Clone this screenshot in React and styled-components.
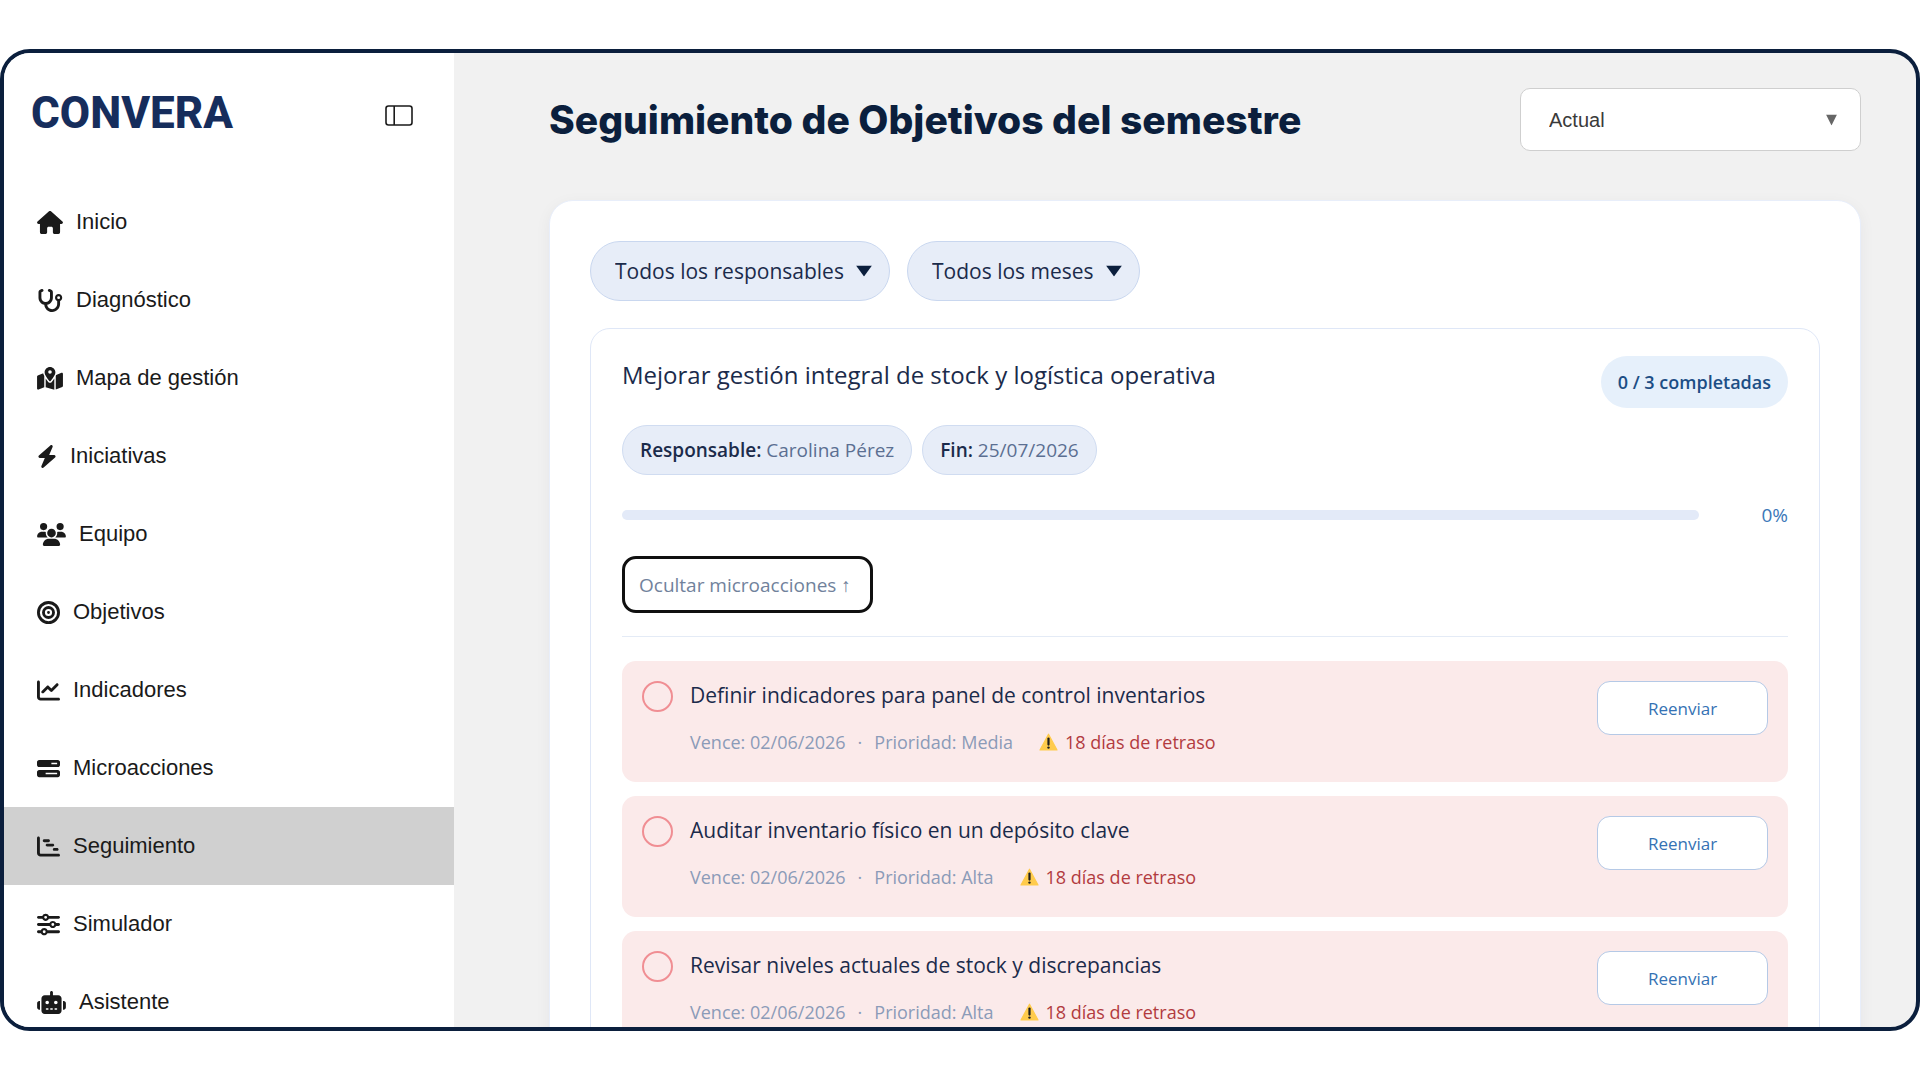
import { useState } from 'react';
import styled, { createGlobalStyle } from 'styled-components';
import {
  FaBarsProgress,
  FaBolt,
  FaBullseye,
  FaChartGantt,
  FaChartLine,
  FaHouse,
  FaMapLocationDot,
  FaRobot,
  FaSliders,
  FaStethoscope,
  FaUsers,
} from 'react-icons/fa6';

const navItems = [
  { label: 'Inicio', icon: FaHouse, width: 26 },
  { label: 'Diagnóstico', icon: FaStethoscope, width: 26 },
  { label: 'Mapa de gestión', icon: FaMapLocationDot, width: 26 },
  { label: 'Iniciativas', icon: FaBolt, width: 20 },
  { label: 'Equipo', icon: FaUsers, width: 29 },
  { label: 'Objetivos', icon: FaBullseye, width: 23 },
  { label: 'Indicadores', icon: FaChartLine, width: 23 },
  { label: 'Microacciones', icon: FaBarsProgress, width: 23 },
  { label: 'Seguimiento', icon: FaChartGantt, width: 23 },
  { label: 'Simulador', icon: FaSliders, width: 23 },
  { label: 'Asistente', icon: FaRobot, width: 29 },
];

const initialActions = [
  {
    id: 1,
    title: 'Definir indicadores para panel de control inventarios',
    due: '02/06/2026',
    priority: 'Media',
    delay: 18,
    done: false,
  },
  {
    id: 2,
    title: 'Auditar inventario físico en un depósito clave',
    due: '02/06/2026',
    priority: 'Alta',
    delay: 18,
    done: false,
  },
  {
    id: 3,
    title: 'Revisar niveles actuales de stock y discrepancias',
    due: '02/06/2026',
    priority: 'Alta',
    delay: 18,
    done: false,
  },
];

function PanelIcon() {
  return (
    <svg width='28' height='21' viewBox='0 0 28 21' fill='none' stroke='#1a1a1a'>
      <rect x='1' y='1' width='26' height='19' rx='2.5' strokeWidth='1.6' />
      <path d='M9.2 1v19' strokeWidth='1.6' />
    </svg>
  );
}

function Caret({ width }) {
  return (
    <svg width={width} height='11' viewBox={`0 0 ${width} 11`} aria-hidden='true'>
      <path d={`M0 0h${width}L${width / 2} 11z`} fill='currentColor' />
    </svg>
  );
}

function WarningIcon() {
  return (
    <svg width='19' height='18' viewBox='0 0 19 18' aria-hidden='true'>
      <path
        d='M9.5 1.2 18 17H1z'
        fill='#ffcb4c'
        stroke='#ffcb4c'
        strokeWidth='1.2'
        strokeLinejoin='round'
      />
      <path d='M9.5 5.6v6' stroke='#1f1f1f' strokeWidth='2.2' strokeLinecap='round' />
      <circle cx='9.5' cy='14.6' r='1.2' fill='#1f1f1f' />
    </svg>
  );
}

function Sidebar() {
  return (
    <SidebarWrapper>
      <Brand>
        <Logo href='#inicio'>CONVERA</Logo>
        <ToggleButton type='button' aria-label='Contraer menú'>
          <PanelIcon />
        </ToggleButton>
      </Brand>
      <nav>
        <NavList>
          {navItems.map(({ label, icon: Icon, width }) => (
            <li key={label}>
              <NavLink href='#' $active={label === 'Seguimiento'} $iconWidth={width}>
                <Icon />
                {label}
              </NavLink>
            </li>
          ))}
        </NavList>
      </nav>
    </SidebarWrapper>
  );
}

function App() {
  const [actions, setActions] = useState(initialActions);
  const [showActions, setShowActions] = useState(true);

  const completed = actions.filter((action) => action.done).length;
  const percent = Math.round((completed / actions.length) * 100);

  const handleToggleDone = (id) => {
    setActions(
      actions.map((action) =>
        action.id === id ? { ...action, done: !action.done } : action
      )
    );
  };

  return (
    <Page>
      <GlobalStyle />
      <Frame>
        <Sidebar />
        <Main>
          <Header>
            <h1>Seguimiento de Objetivos del semestre</h1>
            <PeriodField>
              <select aria-label='Semestre'>
                <option>Actual</option>
                <option>Anterior</option>
              </select>
              <Caret width={11} />
            </PeriodField>
          </Header>

          <Board>
            <Filters>
              <FilterField>
                <select aria-label='Responsables'>
                  <option>Todos los responsables</option>
                </select>
                <Caret width={16} />
              </FilterField>
              <FilterField>
                <select aria-label='Meses'>
                  <option>Todos los meses</option>
                </select>
                <Caret width={16} />
              </FilterField>
            </Filters>

            <Goal>
              <GoalHeader>
                <h2>Mejorar gestión integral de stock y logística operativa</h2>
                <Count>
                  {completed} / {actions.length} completadas
                </Count>
              </GoalHeader>

              <Tags>
                <Tag>
                  <strong>Responsable:</strong> Carolina Pérez
                </Tag>
                <Tag>
                  <strong>Fin:</strong> 25/07/2026
                </Tag>
              </Tags>

              <Progress>
                <Track
                  role='progressbar'
                  aria-label='Avance'
                  aria-valuenow={percent}
                >
                  <div style={{ width: `${percent}%` }} />
                </Track>
                <span>{percent}%</span>
              </Progress>

              <HideButton
                type='button'
                onClick={() => setShowActions(!showActions)}
              >
                {showActions ? 'Ocultar microacciones ↑' : 'Ver microacciones ↓'}
              </HideButton>

              {showActions && (
                <ActionList>
                  {actions.map((action) => (
                    <ActionItem key={action.id}>
                      <Check
                        type='checkbox'
                        id={`action-${action.id}`}
                        checked={action.done}
                        onChange={() => handleToggleDone(action.id)}
                      />
                      <ActionBody>
                        <label htmlFor={`action-${action.id}`}>
                          {action.title}
                        </label>
                        <Meta>
                          <span>Vence: {action.due}</span>
                          <span>·</span>
                          <span>Prioridad: {action.priority}</span>
                          <Delay>
                            <WarningIcon />
                            {action.delay} días de retraso
                          </Delay>
                        </Meta>
                      </ActionBody>
                      <ResendButton type='button'>Reenviar</ResendButton>
                    </ActionItem>
                  ))}
                </ActionList>
              )}
            </Goal>
          </Board>
        </Main>
      </Frame>
    </Page>
  );
}

const GlobalStyle = createGlobalStyle`
  * {
    box-sizing: border-box;
  }
  body {
    margin: 0;
    background: #ffffff;
    font-family: 'Open Sans', 'Noto Sans', sans-serif;
    color: #1b2b4b;
  }
  h1, h2, ul {
    margin: 0;
    padding: 0;
  }
  ul {
    list-style: none;
  }
  button, select {
    font-family: inherit;
    cursor: pointer;
  }
`;

const Page = styled.div`
  height: 100vh;
  padding: 49px 0;
`;

const Frame = styled.div`
  height: 100%;
  display: flex;
  border: 4px solid #0b1f3d;
  border-radius: 30px;
  background: #f1f1f1;
  overflow: hidden;
`;

const SidebarWrapper = styled.aside`
  flex: 0 0 450px;
  background: #ffffff;
  font-family: 'Liberation Sans', Arial, sans-serif;
`;

const Brand = styled.div`
  height: 130px;
  padding: 32px 41px 0 27px;
  display: flex;
  justify-content: space-between;
  align-items: flex-start;
`;

const Logo = styled.a`
  color: #162d5c;
  font-family: Roboto, sans-serif;
  font-size: 44px;
  font-weight: 800;
  line-height: 56px;
  text-decoration: none;
`;

const ToggleButton = styled.button`
  height: 60px;
  padding: 0;
  display: flex;
  align-items: center;
  border: none;
  background: none;
`;

const NavList = styled.ul`
  display: flex;
  flex-direction: column;
`;

const NavLink = styled.a`
  height: 78px;
  padding: 0 33px;
  display: flex;
  align-items: center;
  gap: 13px;
  background: ${({ $active }) => ($active ? '#d0d0d0' : 'transparent')};
  color: #1a1a1a;
  font-size: 22px;
  text-decoration: none;

  svg {
    width: ${({ $iconWidth }) => $iconWidth}px;
    height: 23px;
  }
`;

const Main = styled.main`
  flex: 1;
  min-width: 0;
  padding: 35px 55px 0 95px;
`;

const Header = styled.header`
  margin-bottom: 49px;
  display: flex;
  justify-content: space-between;
  align-items: center;

  h1 {
    color: #0b1f3d;
    font-family: Inter, sans-serif;
    font-size: 39px;
    font-weight: 800;
    line-height: 48px;
  }
`;

const Field = styled.div`
  position: relative;

  select {
    width: 100%;
    appearance: none;
    outline: none;
  }
  svg {
    position: absolute;
    top: 50%;
    transform: translateY(-50%);
    pointer-events: none;
  }
`;

const PeriodField = styled(Field)`
  width: 341px;

  select {
    height: 63px;
    padding: 0 28px;
    border: 1px solid #cfcfcf;
    border-radius: 10px;
    background: #ffffff;
    color: #3a3a3a;
    font-family: 'Liberation Sans', Arial, sans-serif;
    font-size: 20px;
  }
  svg {
    right: 24px;
    color: #666666;
  }
`;

const FilterField = styled(Field)`
  select {
    height: 60px;
    padding: 0 45px 0 24px;
    border: 1px solid #c9d7ef;
    border-radius: 30px;
    background: #e7edf8;
    color: #1b2b4b;
    font-size: 21px;
  }
  svg {
    right: 18px;
    color: #0b1f3d;
  }
`;

const Board = styled.section`
  padding: 40px;
  border: 1px solid #e8eefa;
  border-radius: 24px;
  background: #ffffff;
  box-shadow: 0 4px 16px rgba(11, 31, 61, 0.05);
`;

const Filters = styled.div`
  margin-bottom: 27px;
  display: flex;
  gap: 17px;
`;

const Goal = styled.article`
  padding: 27px 31px 32px;
  border: 1px solid #dfe7f7;
  border-radius: 20px;
`;

const GoalHeader = styled.div`
  display: flex;
  justify-content: space-between;
  align-items: flex-start;

  h2 {
    color: #1b2b4b;
    font-size: 24px;
    font-weight: 400;
    line-height: 38px;
  }
`;

const Count = styled.span`
  padding: 0 17px;
  border-radius: 26px;
  background: #e6f0fb;
  color: #1c4e85;
  font-size: 18px;
  font-weight: 600;
  line-height: 52px;
`;

const Tags = styled.div`
  margin-top: 17px;
  display: flex;
  gap: 10px;
`;

const Tag = styled.span`
  padding: 0 17px;
  border: 1px solid #d0dcf1;
  border-radius: 25px;
  background: #e7edf8;
  color: #5b6f92;
  font-size: 19px;
  line-height: 48px;

  strong {
    color: #1b2b4b;
    font-weight: 600;
  }
`;

const Progress = styled.div`
  margin-top: 25px;
  display: flex;
  align-items: center;
  gap: 16px;

  span {
    width: 73px;
    color: #3c78b8;
    font-size: 19px;
    line-height: 30px;
    text-align: right;
  }
`;

const Track = styled.div`
  flex: 1;
  height: 10px;
  border-radius: 5px;
  background: #e3eaf8;
  overflow: hidden;

  div {
    height: 100%;
    background: #3c78b8;
  }
`;

const HideButton = styled.button`
  height: 57px;
  margin-top: 26px;
  padding: 0 19px 0 14px;
  border: 3px solid #101010;
  border-radius: 14px;
  background: #ffffff;
  color: #71829c;
  font-size: 19px;
`;

const ActionList = styled.ul`
  margin-top: 23px;
  padding-top: 24px;
  display: flex;
  flex-direction: column;
  gap: 14px;
  border-top: 1px solid #e4ebf6;
`;

const ActionItem = styled.li`
  min-height: 121px;
  padding: 20px;
  display: flex;
  align-items: flex-start;
  gap: 17px;
  border-radius: 14px;
  background: #fbeaea;
`;

const Check = styled.input`
  flex: none;
  width: 31px;
  height: 31px;
  margin: 0;
  appearance: none;
  border: 2px solid #f08e93;
  border-radius: 50%;
  cursor: pointer;

  &:checked {
    background: #f08e93;
  }
`;

const ActionBody = styled.div`
  flex: 1;

  label {
    display: block;
    color: #1b2b4b;
    font-size: 21px;
    line-height: 28px;
  }
`;

const Meta = styled.div`
  margin-top: 19px;
  display: flex;
  align-items: center;
  gap: 12px;
  color: #8b9bb8;
  font-size: 18px;
  line-height: 28px;
`;

const Delay = styled.span`
  margin-left: 14px;
  display: flex;
  align-items: center;
  gap: 7px;
  color: #b23b3f;
`;

const ResendButton = styled.button`
  width: 171px;
  height: 54px;
  border: 1px solid #b5c9e6;
  border-radius: 13px;
  background: #ffffff;
  color: #3572b4;
  font-size: 17px;
`;

export default App;
